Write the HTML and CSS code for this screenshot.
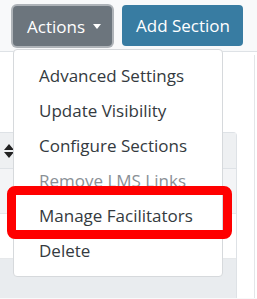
FILE: index.html
```html
<!DOCTYPE html>
<html lang="en">
<head>
    <meta charset="UTF-8">
    <meta name="viewport" content="width=device-width, initial-scale=1.0">
    <title>Sections</title>
    <link rel="stylesheet" href="styles.css">
</head>
<body>
    <div class="toolbar">
        <button class="btn btn-grey focused">Actions <span class="caret"></span></button>
        <button class="btn btn-blue">Add Section</button>
    </div>

    <div class="content">
        <div class="main">
            <div class="gap-top"></div>
            <div class="table">
                <div class="table-head">
                    <svg class="sort" width="10" height="14" viewBox="0 0 10 14">
                        <path d="M5 0 L10 6 L0 6 Z M5 14 L10 8 L0 8 Z" fill="#222"/>
                    </svg>
                </div>
                <div class="table-row shaded"></div>
                <div class="table-row"></div>
                <div class="table-foot"></div>
            </div>
        </div>
        <div class="side"></div>
    </div>

    <ul class="dropdown">
        <li>Advanced Settings</li>
        <li>Update Visibility</li>
        <li>Configure Sections</li>
        <li class="disabled">Remove LMS Links</li>
        <li class="marked">Manage Facilitators</li>
        <li>Delete</li>
    </ul>
</body>
</html>
```

FILE: styles.css
```css
body {
    margin: 0;
    background-color: #f8f9fa;
    font-family: "Open Sans", Arial, sans-serif;
    color: #212529;
    height: 299px;
    overflow: hidden;
}

.toolbar {
    display: flex;
    gap: 10px;
    padding: 6px 0 0 13px;
    height: 46px;
    box-sizing: border-box;
}

.btn {
    font-family: inherit;
    font-size: 17px;
    color: #fff;
    border: none;
    border-radius: 4px;
    height: 40px;
    padding: 0 13px 0 14px;
    display: flex;
    align-items: center;
}

.btn-grey {
    background-color: #6c757d;
    width: 99px;
}

.btn-grey.focused {
    box-shadow: 0 0 0 2px #aeb3b8;
}

.btn-blue {
    background-color: #387ca2;
    height: 41px;
    margin-top: -1px;
}

.caret {
    display: inline-block;
    margin-left: 8px;
    border-top: 5px solid #fff;
    border-left: 4px solid transparent;
    border-right: 4px solid transparent;
}

.content {
    display: flex;
    border-top: 1px solid #dee2e6;
    margin-top: 5px;
    height: 246px;
    background-color: #fff;
    overflow: hidden;
}

.main {
    width: 237px;
}

.gap-top {
    height: 80px;
}

.table {
    border: 1px solid #dee2e6;
    border-left: none;
    border-top-right-radius: 4px;
}

.table-head {
    height: 35px;
    background-color: #eef0f2;
    border-bottom: 1px solid #dee2e6;
    display: flex;
    align-items: center;
    padding-left: 4px;
}

.table-row {
    height: 44px;
    border-bottom: 1px solid #e6e8ea;
}

.table-row.shaded {
    background-color: #f3f4f6;
}

.table-foot {
    height: 60px;
    background-color: #e9ecef;
}

.side {
    width: 17px;
    border-right: 1px solid #e3e5e8;
    margin-top: 3px;
}

.dropdown {
    position: absolute;
    top: 49px;
    left: 13px;
    width: 208px;
    margin: 0;
    padding: 8px 0;
    list-style: none;
    background-color: #fff;
    border: 1px solid #d6d9dc;
    border-radius: 4px;
    font-size: 17px;
    color: #343a40;
}

.dropdown li {
    height: 35px;
    line-height: 35px;
    padding-left: 25px;
    position: relative;
}

.dropdown li.disabled {
    color: #8a9096;
}

.dropdown li.marked::after {
    content: "";
    position: absolute;
    left: -7px;
    right: -10px;
    top: -12px;
    bottom: -6px;
    border: 9px solid #ff0000;
    border-radius: 8px;
}
```
